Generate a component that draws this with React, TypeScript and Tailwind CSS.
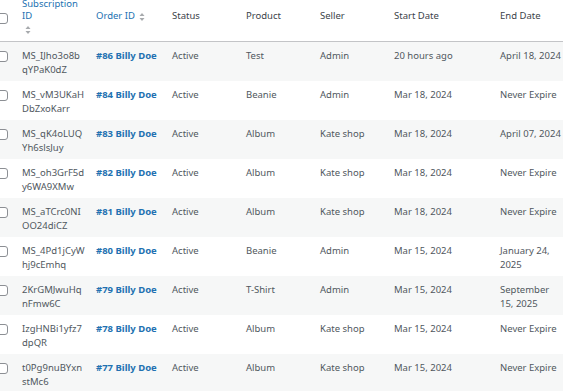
const rows = [
  { id: ['MS_IJho3o8b', 'qYPaK0dZ'], order: '#86 Billy Doe', product: 'Test', seller: 'Admin', start: '20 hours ago', end: ['April 18, 2024'] },
  { id: ['MS_vM3UKaH', 'DbZxoKarr'], order: '#84 Billy Doe', product: 'Beanie', seller: 'Admin', start: 'Mar 18, 2024', end: ['Never Expire'] },
  { id: ['MS_qK4oLUQ', 'Yh6slsJuy'], order: '#83 Billy Doe', product: 'Album', seller: 'Kate shop', start: 'Mar 18, 2024', end: ['April 07, 2024'] },
  { id: ['MS_oh3GrF5d', 'y6WA9XMw'], order: '#82 Billy Doe', product: 'Album', seller: 'Kate shop', start: 'Mar 18, 2024', end: ['Never Expire'] },
  { id: ['MS_aTCrc0NI', 'OO24diCZ'], order: '#81 Billy Doe', product: 'Album', seller: 'Kate shop', start: 'Mar 18, 2024', end: ['Never Expire'] },
  { id: ['MS_4Pd1jCyW', 'hj9cEmhq'], order: '#80 Billy Doe', product: 'Beanie', seller: 'Admin', start: 'Mar 15, 2024', end: ['January 24,', '2025'] },
  { id: ['2KrGMJwuHq', 'nFmw6C'], order: '#79 Billy Doe', product: 'T-Shirt', seller: 'Admin', start: 'Mar 15, 2024', end: ['September', '15, 2025'] },
  { id: ['IzgHNBi1yfz7', 'dpQR'], order: '#78 Billy Doe', product: 'Album', seller: 'Kate shop', start: 'Mar 15, 2024', end: ['Never Expire'] },
  { id: ['t0Pg9nuBYxn', 'stMc6'], order: '#77 Billy Doe', product: 'Album', seller: 'Kate shop', start: 'Mar 15, 2024', end: ['Never Expire'] },
];

const cols = 'grid grid-cols-[22px_74px_76px_74px_74px_74px_106px_1fr]';

function SortArrows() {
  return (
    <svg width="6" height="10" viewBox="0 0 6 10" className="text-[#a7aaad]" fill="currentColor">
      <path d="M0.5 4 L3 1 L5.5 4 Z" />
      <path d="M0.5 6 L3 9 L5.5 6 Z" />
    </svg>
  );
}

function Checkbox({ className = '' }: { className?: string }) {
  return (
    <span className={`block w-[11px] h-[11px] -ml-[3px] rounded-[3px] border border-[#8c8f94] bg-white ${className}`} />
  );
}

export default function App() {
  return (
    <div
      className="w-[563px] h-[391px] overflow-hidden bg-white text-[9.5px] text-[#50575e]"
      style={{ fontFamily: '"Noto Sans", "Open Sans", sans-serif' }}
    >
      <div className="-mt-[8px]">
        {/* Header */}
        <div className={`${cols} h-[50px] items-center border-b border-[#c3c4c7] text-[#3c434a]`}>
          <Checkbox className="mt-[3px]" />
          <div className="flex flex-col leading-[12px] text-[#2271b1]">
            <span>Subscription</span>
            <span>ID</span>
            <span className="mt-[3px] pl-[3px] h-[10px]">
              <SortArrows />
            </span>
          </div>
          <div className="flex items-center gap-[4px] text-[#2271b1]">
            Order ID
            <SortArrows />
          </div>
          <div>Status</div>
          <div>Product</div>
          <div>Seller</div>
          <div>Start Date</div>
          <div>End Date</div>
        </div>

        {/* Rows */}
        {rows.map((r, i) => (
          <div
            key={r.order}
            className={`${cols} h-[39px] pt-[7px] items-start leading-[14px] ${i % 2 === 0 ? 'bg-[#f6f7f7]' : 'bg-white'}`}
          >
            <Checkbox className="mt-[2px]" />
            <div className="flex flex-col whitespace-nowrap">
              <span>{r.id[0]}</span>
              <span>{r.id[1]}</span>
            </div>
            <a className="font-bold text-[#2271b1] whitespace-nowrap">{r.order}</a>
            <div>Active</div>
            <div>{r.product}</div>
            <div>{r.seller}</div>
            <div className="whitespace-nowrap">{r.start}</div>
            <div className="flex flex-col whitespace-nowrap">
              {r.end.map((l) => (
                <span key={l}>{l}</span>
              ))}
            </div>
          </div>
        ))}
      </div>
    </div>
  );
}
